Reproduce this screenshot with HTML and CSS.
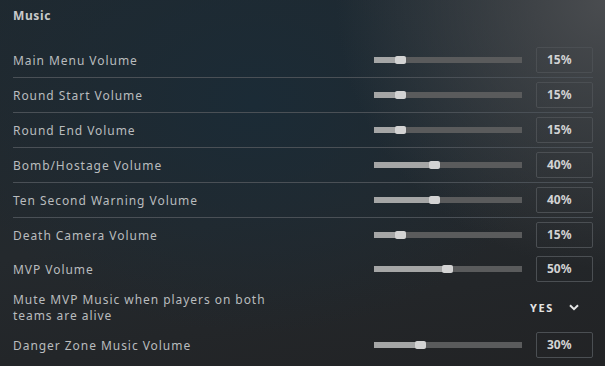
FILE: index.html
```html
<!DOCTYPE html>
<html lang="en">
<head>
<meta charset="UTF-8">
<title>Music Settings</title>
<link rel="stylesheet" href="styles.css">
</head>
<body>
<div class="settings">
    <h2 class="section-title">Music</h2>

    <div class="row sep">
        <div class="label">Main Menu Volume</div>
        <div class="slider"><div class="fill" style="--p: 0.15"></div><div class="thumb" style="--p: 0.15"></div></div>
        <div class="value">15%</div>
    </div>
    <div class="row sep">
        <div class="label">Round Start Volume</div>
        <div class="slider"><div class="fill" style="--p: 0.15"></div><div class="thumb" style="--p: 0.15"></div></div>
        <div class="value">15%</div>
    </div>
    <div class="row sep">
        <div class="label">Round End Volume</div>
        <div class="slider"><div class="fill" style="--p: 0.15"></div><div class="thumb" style="--p: 0.15"></div></div>
        <div class="value">15%</div>
    </div>
    <div class="row sep">
        <div class="label">Bomb/Hostage Volume</div>
        <div class="slider"><div class="fill" style="--p: 0.40"></div><div class="thumb" style="--p: 0.40"></div></div>
        <div class="value">40%</div>
    </div>
    <div class="row sep">
        <div class="label">Ten Second Warning Volume</div>
        <div class="slider"><div class="fill" style="--p: 0.40"></div><div class="thumb" style="--p: 0.40"></div></div>
        <div class="value">40%</div>
    </div>
    <div class="row">
        <div class="label">Death Camera Volume</div>
        <div class="slider"><div class="fill" style="--p: 0.15"></div><div class="thumb" style="--p: 0.15"></div></div>
        <div class="value">15%</div>
    </div>
    <div class="row">
        <div class="label">MVP Volume</div>
        <div class="slider"><div class="fill" style="--p: 0.50"></div><div class="thumb" style="--p: 0.50"></div></div>
        <div class="value">50%</div>
    </div>
    <div class="row tall">
        <div class="label narrow">Mute MVP Music when players on both teams are alive</div>
        <div class="dropdown">
            <span>YES</span>
            <svg width="10" height="7" viewBox="0 0 10 7"><path d="M1 1.2 L5 5.2 L9 1.2" fill="none" stroke="#e6e6e6" stroke-width="2"/></svg>
        </div>
    </div>
    <div class="row">
        <div class="label">Danger Zone Music Volume</div>
        <div class="slider"><div class="fill" style="--p: 0.30"></div><div class="thumb" style="--p: 0.30"></div></div>
        <div class="value">30%</div>
    </div>
</div>
</body>
</html>
```

FILE: styles.css
```css
html, body {
    margin: 0;
    height: 100%;
}

body {
    font-family: "Noto Sans", "DejaVu Sans", sans-serif;
    color: #b9bcbe;
    background:
        radial-gradient(circle at 100% 0%, rgba(78, 80, 83, 0.9) 0, rgba(78, 80, 83, 0) 38%),
        radial-gradient(ellipse at 42% 28%, #1b2b36 0%, rgba(27, 43, 54, 0) 62%),
        linear-gradient(170deg, #1f2930 0%, #24292d 55%, #222325 100%);
    overflow: hidden;
}

.settings {
    padding: 0 12px 0 13px;
}

.section-title {
    margin: 0;
    height: 43px;
    padding-top: 7px;
    box-sizing: border-box;
    font-size: 12px;
    font-weight: bold;
    letter-spacing: 0.6px;
    color: #c9cacb;
}

.row {
    display: flex;
    align-items: center;
    height: 34px;
}

.row.sep {
    border-bottom: 1px solid #4a5056;
}

.row.tall {
    height: 42px;
}

.label {
    flex: 1;
    padding-top: 1px;
    font-size: 12px;
    letter-spacing: 0.95px;
    line-height: 16px;
}

.label.narrow {
    flex: none;
    width: 275px;
}

.slider {
    position: relative;
    width: 148px;
    height: 6px;
    background: #5a5b5c;
    margin-right: 14px;
}

.fill {
    position: absolute;
    left: 0;
    top: 0;
    bottom: 0;
    width: calc(var(--p) * 137px + 2px);
    background: #a5a6a6;
}

.thumb {
    position: absolute;
    top: -1px;
    left: calc(var(--p) * 134px + 1px);
    width: 11px;
    height: 8px;
    border-radius: 2px;
    background: #d3d3d3;
}

.value {
    width: 57px;
    height: 26px;
    box-sizing: border-box;
    border: 1px solid #4b4f53;
    border-radius: 2px;
    padding-left: 10px;
    font-size: 12px;
    font-weight: bold;
    line-height: 24px;
    color: #d2d3d4;
}

.dropdown {
    display: flex;
    align-items: center;
    gap: 15px;
    margin-left: auto;
    margin-right: 14px;
    font-size: 11px;
    font-weight: bold;
    letter-spacing: 1.6px;
    color: #e4e4e4;
}
```
